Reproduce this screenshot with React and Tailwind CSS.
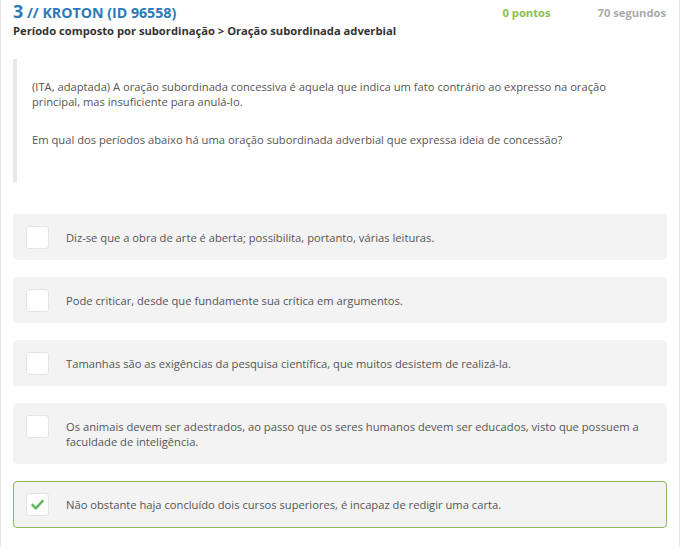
import React from 'react';

const options = [
  { text: 'Diz-se que a obra de arte é aberta; possibilita, portanto, várias leituras.' },
  { text: 'Pode criticar, desde que fundamente sua crítica em argumentos.' },
  { text: 'Tamanhas são as exigências da pesquisa científica, que muitos desistem de realizá-la.' },
  {
    text: 'Os animais devem ser adestrados, ao passo que os seres humanos devem ser educados, visto que possuem a faculdade de inteligência.',
  },
  { text: 'Não obstante haja concluído dois cursos superiores, é incapaz de redigir uma carta.', checked: true },
];

const Check = () => (
  <svg className="w-[13px] h-[13px]" viewBox="0 0 24 24" fill="none">
    <path d="M3 13l6 6L21 6" stroke="#5cb85c" strokeWidth="4.5" strokeLinecap="square" />
  </svg>
);

const Option = ({ text, checked }) => (
  <div
    className={`flex items-start rounded-[4px] bg-[#f3f3f3] px-[12px] pt-[11px] ${
      checked ? 'border border-[#8bb85a] pb-[11px]' : 'border border-transparent pb-[10px]'
    }`}
  >
    <div className="flex h-[23px] w-[23px] shrink-0 items-center justify-center rounded-[3px] border border-[#e4e4e4] bg-white">
      {checked && <Check />}
    </div>
    <p className="ml-[17px] py-[4px] pr-[10px] text-[11.2px] leading-[15px] text-[#555]">{text}</p>
  </div>
);

export default function App() {
  return (
    <div
      className="h-[547px] w-[680px] overflow-hidden border-x border-[#e3e3e3] bg-white px-[12px]"
      style={{ fontFamily: '"Open Sans", sans-serif' }}
    >
      <div className="flex items-start justify-between pt-[1px]">
        <h1 className="font-bold leading-[20px] text-[#2b7ab8]">
          <span className="text-[18px]">3</span>
          <span className="text-[14.2px]"> // KROTON (ID 96558)</span>
        </h1>
        <div className="mt-[4px] flex gap-[47px] pr-[1px] text-[11.2px] font-bold">
          <span className="text-[#8bc04f]">0 pontos</span>
          <span className="text-[#aaaaaa]">70 segundos</span>
        </div>
      </div>
      <h2 className="text-[11.2px] font-bold leading-[16px] text-[#333]">
        Período composto por subordinação &gt; Oração subordinada adverbial
      </h2>

      <div className="mt-[20px] border-l-[4px] border-[#e8e8e8] pb-[12px] pl-[15px] pr-[30px] pt-[20px] text-[11.2px] leading-[15px] text-[#555]">
        <p className="mb-[23px]">
          (ITA, adaptada) A oração subordinada concessiva é aquela que indica um fato contrário ao expresso na oração
          principal, mas insuficiente para anulá-lo.
        </p>
        <p className="mb-[23px]">
          Em qual dos períodos abaixo há uma oração subordinada adverbial que expressa ideia de concessão?
        </p>
      </div>

      <div className="mt-[32px] flex flex-col gap-[17px]">
        {options.map((o, i) => (
          <Option key={i} {...o} />
        ))}
      </div>
    </div>
  );
}
